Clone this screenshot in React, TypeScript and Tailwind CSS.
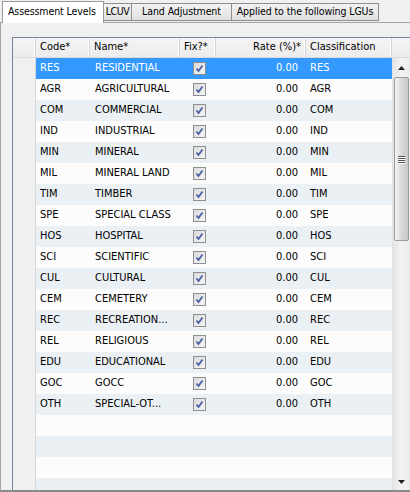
import React from "react";

const rows: [string, string][] = [
  ["RES", "RESIDENTIAL"],
  ["AGR", "AGRICULTURAL"],
  ["COM", "COMMERCIAL"],
  ["IND", "INDUSTRIAL"],
  ["MIN", "MINERAL"],
  ["MIL", "MINERAL LAND"],
  ["TIM", "TIMBER"],
  ["SPE", "SPECIAL CLASS"],
  ["HOS", "HOSPITAL"],
  ["SCI", "SCIENTIFIC"],
  ["CUL", "CULTURAL"],
  ["CEM", "CEMETERY"],
  ["REC", "RECREATION..."],
  ["REL", "RELIGIOUS"],
  ["EDU", "EDUCATIONAL"],
  ["GOC", "GOCC"],
  ["OTH", "SPECIAL-OT..."],
];

function Check() {
  return (
    <div className="w-[13px] h-[13px] border border-[#8e8f8f] bg-gradient-to-br from-[#dcdcdc] to-[#f4f4f4] flex items-center justify-center">
      <svg width="9" height="9" viewBox="0 0 9 9">
        <path d="M1.5 4.5 L3.5 7 L7.5 1.5" stroke="#4b61a6" strokeWidth="1.8" fill="none" />
      </svg>
    </div>
  );
}

function HeadCell({ w, children, right }: { w: string; children?: React.ReactNode; right?: boolean }) {
  return (
    <div className={`${w} h-full flex items-center border-r border-[#d5d5d5] shadow-[inset_-1px_0_0_#ffffff] whitespace-nowrap ${right ? "justify-end pr-[4px]" : "pl-[4px]"}`}>
      {children}
    </div>
  );
}

export default function App() {
  const empty = 4;
  return (
    <div className="w-[410px] h-[492px] bg-[#f0f0f0] flex flex-col text-[11px] text-black overflow-hidden" style={{ fontFamily: '"DejaVu Sans Condensed", "Liberation Sans", Arial, sans-serif' }}>
      {/* tabs */}
      <div className="h-[22px] flex items-end pl-[2px] relative text-[10.5px] tracking-[-0.1px]">
        <div className="h-[22px] w-[102px] bg-white border border-b-0 border-[#9a9a9a] flex items-center pl-[5px] pb-[2px] relative z-10 -mb-px whitespace-nowrap">
          Assessment Levels
        </div>
        <div className="h-[18px] mb-[1px] w-[28px] bg-gradient-to-b from-[#f2f2f2] to-[#e1e1e1] border border-l-0 border-[#8e8f94] flex items-center justify-center whitespace-nowrap tracking-[-0.4px]">LCUV</div>
        <div className="h-[18px] mb-[1px] w-[100px] bg-gradient-to-b from-[#f2f2f2] to-[#e1e1e1] border border-l-0 border-[#8e8f94] flex items-center justify-center whitespace-nowrap">Land Adjustment</div>
        <div className="h-[18px] mb-[1px] w-[147px] bg-gradient-to-b from-[#f2f2f2] to-[#e1e1e1] border border-l-0 border-[#8e8f94] flex items-center justify-center whitespace-nowrap">Applied to the following LGUs</div>
      </div>
      {/* panel */}
      <div className="flex-1 flex flex-col border-t border-l border-[#a5a5a5] border-b-2 border-b-[#8a8a8a] bg-[#f0f0f0] pt-[14px] pl-[11px] min-h-0">
        <div className="flex-1 flex flex-col border-t border-l border-[#76869a] min-h-0">
          {/* header */}
          <div className="h-[20px] flex bg-gradient-to-b from-[#f4f4f4] to-[#ececec] border-b border-[#dadada]">
            <HeadCell w="w-[23px]" />
            <HeadCell w="w-[54px]">Code*</HeadCell>
            <HeadCell w="w-[90px]">Name*</HeadCell>
            <HeadCell w="w-[36px]">Fix?*</HeadCell>
            <HeadCell w="w-[90px]" right>Rate (%)*</HeadCell>
            <HeadCell w="w-[86px]">Classification</HeadCell>
            <div className="flex-1" />
          </div>
          <div className="flex-1 flex min-h-0">
            {/* row header column */}
            <div className="w-[23px] border-r border-[#d9d9d9] bg-[#f0f0f0]" />
            {/* rows */}
            <div className="w-[356px] flex flex-col overflow-hidden">
              {rows.map(([c, n], i) => {
                const sel = i === 0;
                const bg = sel ? "bg-[#3399ff] text-white" : i % 2 === 0 ? "bg-[#ebf0f5]" : "bg-[#fcfcfc]";
                return (
                  <div key={c} className={`h-[21px] shrink-0 flex items-center ${bg}`}>
                    <div className="w-[54px] pl-[4px]">{c}</div>
                    <div className="w-[90px] pl-[5px] whitespace-nowrap">{n}</div>
                    <div className="w-[36px] flex justify-center pl-[2px]"><Check /></div>
                    <div className="w-[90px] text-right pr-[8px]">0.00</div>
                    <div className="w-[86px] pl-[4px]">{c}</div>
                  </div>
                );
              })}
              {Array.from({ length: empty }).map((_, k) => (
                <div key={k} className={`h-[21px] shrink-0 ${(rows.length + k) % 2 === 0 ? "bg-[#ebf0f5]" : "bg-[#fcfcfc]"}`} />
              ))}
            </div>
            {/* scrollbar */}
            <div className="flex-1 flex flex-col bg-gradient-to-r from-[#e6e6e6] via-[#f3f3f3] to-[#ececec] border-l border-[#e2e2e2]">
              <div className="h-[19px] flex items-center justify-center">
                <svg width="7" height="4" viewBox="0 0 7 4"><path d="M0 4 L3.5 0 L7 4 Z" fill="#222" /></svg>
              </div>
              <div className="h-[164px] mx-[1px] rounded-[2px] border border-[#9b9b9b] bg-gradient-to-r from-[#f6f6f6] via-[#d8d8d8] to-[#c8c8c8] flex items-center justify-center">
                <div className="flex flex-col gap-[1px]">
                  {[0, 1, 2, 3].map((k) => (
                    <div key={k} className="w-[7px] h-[1px] bg-[#555] shadow-[0_1px_0_#fff]" />
                  ))}
                </div>
              </div>
              <div className="flex-1" />
              <div className="h-[17px] flex items-center justify-center">
                <svg width="7" height="4" viewBox="0 0 7 4"><path d="M0 0 L7 0 L3.5 4 Z" fill="#222" /></svg>
              </div>
            </div>
          </div>
        </div>
      </div>
    </div>
  );
}
